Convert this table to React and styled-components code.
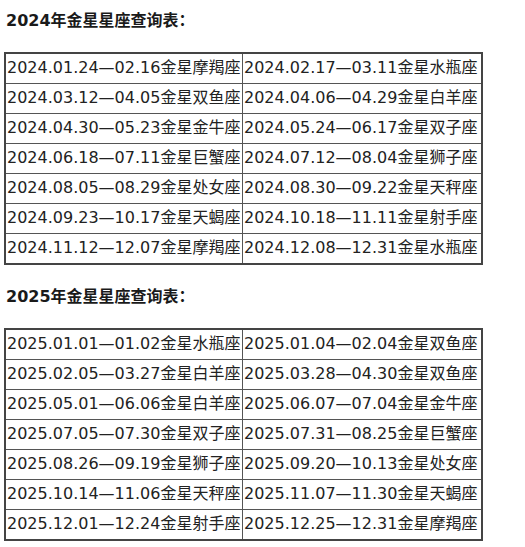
import React from "react";
import styled, { createGlobalStyle } from "styled-components";

const GlobalStyle = createGlobalStyle`
  html, body {
    margin: 0;
    padding: 0;
    background: #fff;
  }
  body {
    font-family: "DejaVu Sans", "Noto Sans CJK SC", sans-serif;
    color: #222;
  }
`;

const tables = [
  {
    title: "2024年金星星座查询表：",
    rows: [
      ["2024.01.24—02.16金星摩羯座", "2024.02.17—03.11金星水瓶座"],
      ["2024.03.12—04.05金星双鱼座", "2024.04.06—04.29金星白羊座"],
      ["2024.04.30—05.23金星金牛座", "2024.05.24—06.17金星双子座"],
      ["2024.06.18—07.11金星巨蟹座", "2024.07.12—08.04金星狮子座"],
      ["2024.08.05—08.29金星处女座", "2024.08.30—09.22金星天秤座"],
      ["2024.09.23—10.17金星天蝎座", "2024.10.18—11.11金星射手座"],
      ["2024.11.12—12.07金星摩羯座", "2024.12.08—12.31金星水瓶座"],
    ],
  },
  {
    title: "2025年金星星座查询表：",
    rows: [
      ["2025.01.01—01.02金星水瓶座", "2025.01.04—02.04金星双鱼座"],
      ["2025.02.05—03.27金星白羊座", "2025.03.28—04.30金星双鱼座"],
      ["2025.05.01—06.06金星白羊座", "2025.06.07—07.04金星金牛座"],
      ["2025.07.05—07.30金星双子座", "2025.07.31—08.25金星巨蟹座"],
      ["2025.08.26—09.19金星狮子座", "2025.09.20—10.13金星处女座"],
      ["2025.10.14—11.06金星天秤座", "2025.11.07—11.30金星天蝎座"],
      ["2025.12.01—12.24金星射手座", "2025.12.25—12.31金星摩羯座"],
    ],
  },
];

const App = () => {
  return (
    <Page>
      <GlobalStyle />
      {tables.map((t, i) => (
        <Section key={t.title} $first={i === 0}>
          <Heading>{t.title}</Heading>
          <Table>
            <tbody>
              {t.rows.map((r) => (
                <tr key={r[0]}>
                  <Cell $w={235}>{r[0]}</Cell>
                  <Cell $w={237}>{r[1]}</Cell>
                </tr>
              ))}
            </tbody>
          </Table>
        </Section>
      ))}
    </Page>
  );
};

export default App;

const Page = styled.div`
  padding: 11px 0 0 4px;
`;

const Section = styled.section`
  margin-top: ${(p) => (p.$first ? "0" : "22px")};
`;

const Heading = styled.h2`
  margin: 0 0 0 2px;
  font-size: 16px;
  line-height: 20px;
  font-weight: bold;
  color: #1a1a1a;
`;

const Table = styled.table`
  margin-top: 21px;
  border-collapse: collapse;
  border: 2px solid #444;
  table-layout: fixed;
`;

const Cell = styled.td`
  width: ${(p) => p.$w}px;
  border: 1px solid #555;
  padding: 0 0 1px 1px;
  height: 28px;
  font-size: 16px;
  line-height: 20px;
  color: #222;
  white-space: nowrap;
  overflow: hidden;
`;
